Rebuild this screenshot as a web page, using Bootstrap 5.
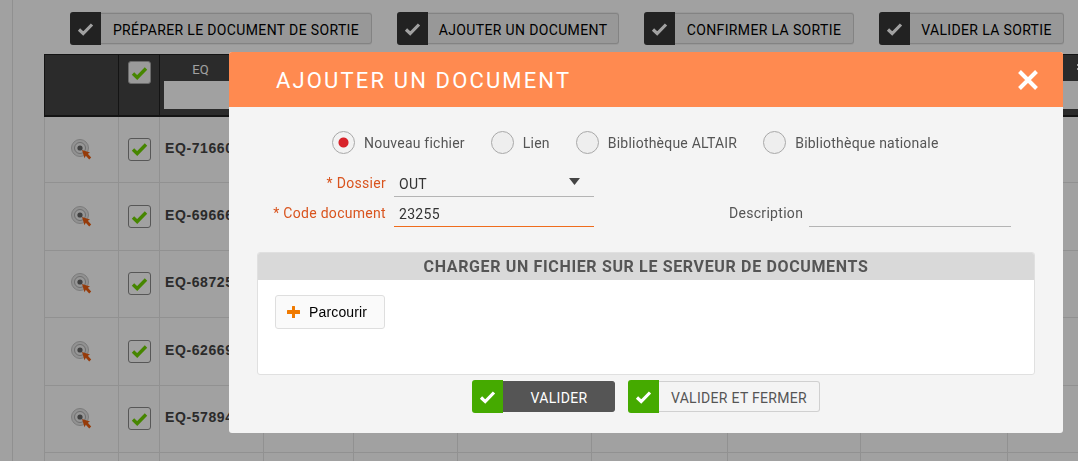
<!doctype html>
<html lang="fr">
<head>
<meta charset="utf-8">
<title>Ajouter un document</title>
<link href="https://cdn.jsdelivr.net/npm/bootstrap@5.3.0/dist/css/bootstrap.min.css" rel="stylesheet">
<style>
html,body{height:461px;overflow:hidden}
body{background:#fff;font-family:Roboto,"Liberation Sans",sans-serif;font-size:14px;color:#333;letter-spacing:.3px}
.page-frame{margin-left:12px;padding:12px 0 0 31px;border-left:1px solid #e4e4e4;height:461px;overflow:hidden}
.tool-bar{gap:25px;margin-left:26px;height:33px;margin-bottom:9px}
.split-btn{display:inline-flex;align-items:stretch;padding:0;border-radius:3px;font-size:14px;line-height:1;overflow:hidden;text-transform:uppercase;letter-spacing:.3px;white-space:nowrap;--bs-btn-border-width:0}
.split-btn .tick-box{width:31px;display:flex;align-items:center;justify-content:center;flex:none}
.split-btn .btn-text{display:flex;align-items:center;justify-content:center;border:1px solid #d0d0d0;border-left:0;border-radius:0 3px 3px 0;margin:1px 0;padding-top:2px}
.tool-btn{color:#000;background:#f1f1f1;letter-spacing:.36px}
.tool-btn:hover{color:#000;background:#f1f1f1}
.tool-btn .tick-box{background:#363636}
.tool-btn .btn-text{background:#f1f1f1}
.w-prep{width:271px}.w-add{width:191px}.w-conf{width:179px}.w-val{width:154px}
.data-grid{table-layout:fixed;width:1043px;border-collapse:collapse;margin:0}
.data-grid th,.data-grid td{padding:0;border:1px solid #e6e6e6;vertical-align:middle;background:#fff}
.data-grid thead th{background:#454545;border-width:1px 1px 2px 1px;border-style:solid;border-color:#202020;height:61px;color:#fff;font-weight:400;font-size:13px;letter-spacing:0;text-align:center;vertical-align:top;position:relative}
.data-grid tbody td{height:67.4px}
.head-label{display:block;height:26px;line-height:30px}
.head-label.is-first{padding-right:22px}
.head-input{display:block;height:28px;width:calc(100% - 9px);margin:0 5px 0 4px;background:#fff;border:0;padding:0}
.edge-mark{position:absolute;left:69px;top:9px;width:3px;height:6px;border-top:2px solid #fff;border-bottom:2px solid #fff}
.tick-cell{text-align:center}
.tick-square{display:inline-flex;align-items:center;justify-content:center;width:23px;height:23px;border:1px solid #8a8a8a;border-radius:3px;background:#fff;vertical-align:middle}
thead .tick-square{margin-top:6px;background:#f4f4f4;border-color:#aaa}
.code-cell{font-family:"Liberation Sans",sans-serif;font-weight:700;font-size:14px;letter-spacing:.6px;color:#444;padding-left:5px!important;padding-bottom:2px!important}
.target-icon{display:block;margin:3px 0 0 26px}
.modal-backdrop.show{opacity:.37}
.doc-dialog{max-width:none;width:834px;margin:52px 15px 0 229px}
.doc-content{border:0;border-radius:3px;background:#f4f4f4;height:381px;overflow:hidden}
.doc-header{background:#ff8a50;height:55px;padding:0 24px 0 47px;border:0;border-radius:0}
.doc-title{color:#fff;font-size:22px;font-weight:400;letter-spacing:2.15px;line-height:1;margin:0;padding-top:2px}
.close-x{background:none;border:0;padding:0;display:block;line-height:0}
.doc-body{padding:0}
.radio-row{padding:23px 0 0 103px;height:50px;color:#555;letter-spacing:.22px}
.radio-row .form-check-input{width:23px;height:23px;margin:0 9px 0 0;border:1px solid #a8a8a8;background-color:#eee;flex:none}
.radio-row .form-check-input:checked[type=radio]{background-color:#f2f2f2;border-color:#a8a8a8;background-image:radial-gradient(circle,#d8232a 0 4.5px,transparent 5.5px)}
.radio-row .form-check-input:focus{box-shadow:none}
.radio-item{display:flex;align-items:center;margin-right:26px;padding:0;min-height:0}
.radio-item .form-check-label{line-height:1;padding-top:1px}
.first-field{margin-top:10px}
.field-row{height:30px;align-items:center}
.req-label{width:165px;text-align:right;color:#d9541e;margin:0;padding:1px 8px 0 0;flex:none;line-height:1}
.flat-field{width:200px;flex:none;height:30px;border:0;border-bottom:1px solid #b4b4b4;border-radius:0;background-color:transparent;padding:4px 5px 0;font-size:14px;color:#333;line-height:1;letter-spacing:.3px}
.flat-field:focus{background-color:transparent;box-shadow:none;border-color:#b4b4b4}
.flat-field.is-wide{width:202px}
select.flat-field{background-image:url("data:image/svg+xml,%3Csvg xmlns='http://www.w3.org/2000/svg' width='11' height='7'%3E%3Cpath d='M0 0h11L5.5 7z' fill='%23444'/%3E%3C/svg%3E");background-size:11px 7px;background-position:right 14px center}
.flat-field.is-current{border-bottom-color:#ef6c1c}
.desc-label{margin:0 6px 0 135px;color:#555;flex:none;line-height:1;padding-top:1px}
.upload-panel{margin:25px 28px 0;height:123px;background:#fff;border:1px solid #e0e0e0;border-radius:3px;overflow:hidden}
.upload-head{background:#d9d9d9;height:28px;margin:-1px -1px 0;text-align:center;line-height:30px;font-weight:700;font-size:16px;color:#555;letter-spacing:.65px;text-transform:uppercase}
.browse-btn{display:inline-flex;align-items:center;margin:15px 0 0 17px;width:110px;height:34px;padding:0 0 0 10px;background:#fafafa;border:1px solid #dedede;border-radius:3px;font-family:"Liberation Sans",sans-serif;font-size:14px;letter-spacing:.15px;color:#000}
.browse-btn:hover{background:#fafafa;color:#000;border-color:#dedede}
.browse-btn svg{margin-right:8px}
.action-row{gap:13px;margin:5px 0 0 243px;height:33px}
.action-row .tick-box{background:#45aa00}
.act-main{color:#fff;background:transparent}
.act-main:hover{color:#fff;background:transparent}
.act-main .btn-text{background:#555;border-color:#555;color:#fff;width:112px;padding-left:1px}
.act-alt{color:#555;background:transparent}
.act-alt:hover{color:#555;background:transparent}
.act-alt .btn-text{background:#f4f4f4;color:#555;width:161px}
</style>
</head>
<body>
<div class="page-frame">
  <div class="d-flex tool-bar">
    <button type="button" class="btn split-btn tool-btn"><span class="tick-box"><svg width="17" height="14" viewBox="0 0 17 14"><path d="M2 7.5l4.2 4L15 2.5" fill="none" stroke="#fff" stroke-width="3.2"/></svg></span><span class="btn-text w-prep">Préparer le document de sortie</span></button>
    <button type="button" class="btn split-btn tool-btn"><span class="tick-box"><svg width="17" height="14" viewBox="0 0 17 14"><path d="M2 7.5l4.2 4L15 2.5" fill="none" stroke="#fff" stroke-width="3.2"/></svg></span><span class="btn-text w-add">Ajouter un document</span></button>
    <button type="button" class="btn split-btn tool-btn"><span class="tick-box"><svg width="17" height="14" viewBox="0 0 17 14"><path d="M2 7.5l4.2 4L15 2.5" fill="none" stroke="#fff" stroke-width="3.2"/></svg></span><span class="btn-text w-conf">Confirmer la sortie</span></button>
    <button type="button" class="btn split-btn tool-btn"><span class="tick-box"><svg width="17" height="14" viewBox="0 0 17 14"><path d="M2 7.5l4.2 4L15 2.5" fill="none" stroke="#fff" stroke-width="3.2"/></svg></span><span class="btn-text w-val">Valider la sortie</span></button>
  </div>
  <table class="table data-grid">
    <colgroup><col style="width:74px"><col style="width:41px"><col style="width:104px"><col style="width:90px"><col style="width:104px"><col style="width:134px"><col style="width:136px"><col style="width:133px"><col style="width:147px"><col style="width:80px"></colgroup>
    <thead>
      <tr>
        <th></th>
        <th><span class="tick-square"><svg width="17" height="14" viewBox="0 0 17 14"><path d="M2 7.5l4.2 4L15 2.5" fill="none" stroke="#6fd400" stroke-width="3.4"/></svg></span></th>
        <th><span class="head-label is-first">EQ</span><span class="head-input"></span></th>
        <th><span class="head-label"></span><span class="head-input"></span></th>
        <th><span class="head-label"></span><span class="head-input"></span></th>
        <th><span class="head-label"></span><span class="head-input"></span></th>
        <th><span class="head-label"></span><span class="head-input"></span></th>
        <th><span class="head-label"></span><span class="head-input"></span></th>
        <th><span class="head-label"></span><span class="head-input"></span></th>
        <th><span class="edge-mark"></span><span class="head-label"></span><span class="head-input"></span></th>
      </tr>
    </thead>
    <tbody id="grid-rows"></tbody>
  </table>
</div>

<div class="modal-backdrop show"></div>
<div class="modal d-block" tabindex="-1">
  <div class="modal-dialog doc-dialog">
    <div class="modal-content doc-content">
      <div class="modal-header doc-header">
        <h1 class="modal-title doc-title">AJOUTER UN DOCUMENT</h1>
        <button type="button" class="close-x ms-auto" aria-label="Fermer"><svg width="22" height="22" viewBox="0 0 22 22"><path d="M2.5 2.5l17 17M19.5 2.5l-17 17" stroke="#fff" stroke-width="4" fill="none"/></svg></button>
      </div>
      <div class="modal-body doc-body">
        <div class="d-flex radio-row">
          <div class="form-check radio-item"><input class="form-check-input" type="radio" name="src" id="r1" checked><label class="form-check-label" for="r1">Nouveau fichier</label></div>
          <div class="form-check radio-item"><input class="form-check-input" type="radio" name="src" id="r2"><label class="form-check-label" for="r2">Lien</label></div>
          <div class="form-check radio-item"><input class="form-check-input" type="radio" name="src" id="r3"><label class="form-check-label" for="r3">Bibliothèque ALTAIR</label></div>
          <div class="form-check radio-item"><input class="form-check-input" type="radio" name="src" id="r4"><label class="form-check-label" for="r4">Bibliothèque nationale</label></div>
        </div>
        <div class="d-flex field-row first-field">
          <label class="req-label" for="f1">* Dossier</label>
          <select class="form-select flat-field" id="f1"><option>OUT</option></select>
        </div>
        <div class="d-flex field-row">
          <label class="req-label" for="f2">* Code document</label>
          <input class="form-control flat-field is-current" id="f2" value="23255">
          <label class="desc-label" for="f3">Description</label>
          <input class="form-control flat-field is-wide" id="f3">
        </div>
        <div class="upload-panel">
          <div class="upload-head">Charger un fichier sur le serveur de documents</div>
          <button type="button" class="btn browse-btn"><svg width="15" height="14" viewBox="0 0 15 14"><path d="M6 1.5a.5.5 0 0 1 .5-.5h2a.5.5 0 0 1 .5.5V5h4.5a.5.5 0 0 1 .5.5v3a.5.5 0 0 1-.5.5H9v3.500a.5.5 0 0 1-.5.5h-2a.5.5 0 0 1-.5-.5V9H1.500a.5.5 0 0 1-.5-.5v-3a.5.5 0 0 1 .5-.5H6z" fill="#f07a00"/></svg>Parcourir</button>
        </div>
        <div class="d-flex action-row">
          <button type="button" class="btn split-btn act-main"><span class="tick-box"><svg width="17" height="14" viewBox="0 0 17 14"><path d="M2 7.5l4.2 4L15 2.5" fill="none" stroke="#fff" stroke-width="3.2"/></svg></span><span class="btn-text">Valider</span></button>
          <button type="button" class="btn split-btn act-alt"><span class="tick-box"><svg width="17" height="14" viewBox="0 0 17 14"><path d="M2 7.5l4.2 4L15 2.5" fill="none" stroke="#fff" stroke-width="3.2"/></svg></span><span class="btn-text">Valider et fermer</span></button>
        </div>
      </div>
    </div>
  </div>
</div>
<script src="https://cdn.jsdelivr.net/npm/bootstrap@5.3.0/dist/js/bootstrap.bundle.min.js"></script>
<script>
var codes=["EQ-71660","EQ-69666","EQ-68725","EQ-62669","EQ-57894",""];
var icon='<svg class="target-icon" width="24" height="24" viewBox="0 0 24 24"><circle cx="9" cy="9" r="8.5" fill="#e6e6e6" stroke="#c4c4c4"/><circle cx="9" cy="9" r="5.5" fill="#efefef" stroke="#b0b0b0"/><circle cx="9" cy="9" r="2.6" fill="#666"/><path d="M11 11l8 2.5-2.2 1.3 3.4 3.6-2 2-3.4-3.6-1.3 2.4z" fill="#ee5e10"/></svg>';
var tick='<span class="tick-square"><svg width="17" height="14" viewBox="0 0 17 14"><path d="M2 7.5l4.2 4L15 2.5" fill="none" stroke="#6fd400" stroke-width="3.4"/></svg></span>';
var html="";
codes.forEach(function(c){
  html+=c?'<tr><td>'+icon+'</td><td class="tick-cell">'+tick+'</td><td class="code-cell">'+c+'</td>'+'<td></td>'.repeat(7)+'</tr>':'<tr>'+'<td></td>'.repeat(10)+'</tr>';
});
document.getElementById("grid-rows").innerHTML=html;
</script>
</body>
</html>
